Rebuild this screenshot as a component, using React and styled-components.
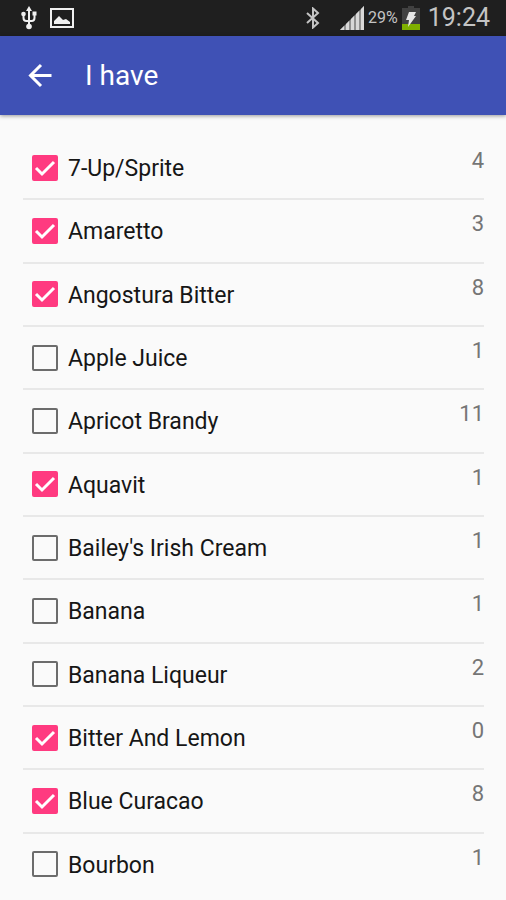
import { useState } from "react";
import styled, { createGlobalStyle } from "styled-components";

const GlobalStyle = createGlobalStyle`
  * {
    box-sizing: border-box;
  }
  body {
    margin: 0;
    background-color: #fafafa;
    font-family: Roboto, "Liberation Sans", sans-serif;
  }
`;

const Container = styled.div`
  min-height: 100vh;
  display: flex;
  flex-direction: column;
`;

const StatusBar = styled.div`
  height: 36px;
  padding: 0 16px 0 20px;
  display: flex;
  align-items: center;
  justify-content: space-between;
  background-color: #1f1f1f;
  color: #c4c4c4;
`;

const StatusGroup = styled.div`
  display: flex;
  align-items: center;
  gap: ${(props) => props.$gap}px;
`;

const Signal = styled.svg`
  margin-left: 16px;
`;

const Battery = styled.span`
  font-size: 16px;
  line-height: 36px;
`;

const Clock = styled.time`
  margin-left: 4px;
  font-size: 25px;
  line-height: 34px;
`;

const AppBar = styled.header`
  height: 79px;
  padding: 0 24px;
  display: flex;
  align-items: center;
  gap: 29px;
  background-color: #3f51b5;
  box-shadow: 0 1px 4px rgba(0, 0, 0, 0.4);
  color: #ffffff;
`;

const BackButton = styled.button`
  width: 32px;
  height: 32px;
  padding: 0;
  border: none;
  background: none;
  color: inherit;
  cursor: pointer;
`;

const Title = styled.h1`
  margin: 0;
  font-size: 28px;
  font-weight: 400;
  line-height: 32px;
`;

const List = styled.ul`
  flex: 1;
  margin: 0;
  padding: 22px 22px 3px 23px;
  display: flex;
  flex-direction: column;
  list-style: none;
`;

const Row = styled.li`
  flex: 1 0 auto;
  min-height: 56px;
  display: flex;
  justify-content: space-between;
  border-bottom: 2px solid #e8e8e8;
  &:last-child {
    border-bottom-color: transparent;
  }
`;

const Label = styled.label`
  flex: 1;
  padding-left: 9px;
  display: flex;
  align-items: center;
  gap: 10px;
  color: #161616;
  font-size: 23px;
  line-height: 28px;
  cursor: pointer;
`;

const Name = styled.span`
  padding-top: 3px;
`;

const CheckArea = styled.span`
  display: grid;
  width: 26px;
  height: 26px;
  & > * {
    grid-area: 1 / 1;
  }
`;

const Checkbox = styled.input`
  appearance: none;
  width: 26px;
  height: 26px;
  margin: 0;
  border: 2px solid #6c6c6c;
  border-radius: 2px;
  cursor: pointer;
  &:checked {
    border-color: #ff3a80;
    background-color: #ff3a80;
  }
`;

const Tick = styled.svg`
  pointer-events: none;
`;

const Count = styled.span`
  padding-top: 10px;
  color: #757575;
  font-size: 22px;
  line-height: 28px;
`;

const ingredients = [
  { name: "7-Up/Sprite", count: 4, have: true },
  { name: "Amaretto", count: 3, have: true },
  { name: "Angostura Bitter", count: 8, have: true },
  { name: "Apple Juice", count: 1, have: false },
  { name: "Apricot Brandy", count: 11, have: false },
  { name: "Aquavit", count: 1, have: true },
  { name: "Bailey's Irish Cream", count: 1, have: false },
  { name: "Banana", count: 1, have: false },
  { name: "Banana Liqueur", count: 2, have: false },
  { name: "Bitter And Lemon", count: 0, have: true },
  { name: "Blue Curacao", count: 8, have: true },
  { name: "Bourbon", count: 1, have: false },
];

const UsbIcon = () => (
  <svg width="18" height="26" viewBox="0 0 18 26" fill="none" stroke="#f0f0f0" strokeWidth="2">
    <path d="M9 4v18M3.500 9v4q0 3 3 3h5q3 0 3-3V9" />
    <path d="M9 1l3 5H6z" fill="#f0f0f0" stroke="none" />
    <circle cx="9" cy="21.500" r="2.800" fill="#f0f0f0" stroke="none" />
    <circle cx="3.500" cy="9" r="2.300" fill="#f0f0f0" stroke="none" />
    <path d="M12.500 6.500h4v4h-4z" fill="#f0f0f0" stroke="none" />
  </svg>
);

const PictureIcon = () => (
  <svg width="24" height="20" viewBox="0 0 24 20">
    <rect x="1" y="1" width="22" height="18" fill="none" stroke="#f0f0f0" strokeWidth="2" />
    <path d="M4 16v-3l5-5 4 4 3-1 4 3v2z" fill="#f0f0f0" />
  </svg>
);

const BluetoothIcon = () => (
  <svg width="14" height="22" viewBox="0 0 14 22" fill="none" stroke="#c4c4c4" strokeWidth="2">
    <path d="M1 6l11 10-5 4.500V1.500L12 6 1 16" />
  </svg>
);

const SignalIcon = () => (
  <Signal width="24" height="24" viewBox="0 0 24 24">
    <path d="M24 0v24H0z" fill="#8f8f8f" />
    <path d="M4 20v4H0zM6 18l3-3v9H6zM11 13l3-3v14h-3zM16 8l3-3v19h-3zM21 3l3-3v24h-3z" fill="#d8d8d8" />
  </Signal>
);

const BatteryIcon = () => (
  <svg width="18" height="24" viewBox="0 0 18 24">
    <path d="M6 0h6v2h6v16H0V2h6z" fill="#414141" />
    <path d="M0 18h18v6H0z" fill="#7fb000" />
    <path d="M7 6h7l-2 4h2l-8 11 1-7H4z" fill="#e6e6e6" />
  </svg>
);

const BackIcon = () => (
  <svg width="32" height="32" viewBox="0 0 32 32" fill="none" stroke="currentColor" strokeWidth="3">
    <path d="M27.500 15.500H7M17 5L6.500 15.500 17 26" />
  </svg>
);

const Ingredient = ({ name, count, have }) => {
  const [checked, setChecked] = useState(have);

  return (
    <Row>
      <Label>
        <CheckArea>
          <Checkbox
            type="checkbox"
            checked={checked}
            onChange={(e) => setChecked(e.target.checked)}
          />
          {checked && (
            <Tick width="26" height="26" viewBox="0 0 26 26" fill="none" stroke="#ffffff" strokeWidth="3">
              <path d="M4 13l6 6L22 7" />
            </Tick>
          )}
        </CheckArea>
        <Name>{name}</Name>
      </Label>
      <Count>{count}</Count>
    </Row>
  );
};

const App = () => {
  return (
    <Container>
      <GlobalStyle />
      <StatusBar>
        <StatusGroup $gap={12}>
          <UsbIcon />
          <PictureIcon />
        </StatusGroup>
        <StatusGroup $gap={4}>
          <BluetoothIcon />
          <SignalIcon />
          <Battery>29%</Battery>
          <BatteryIcon />
          <Clock>19:24</Clock>
        </StatusGroup>
      </StatusBar>
      <AppBar>
        <BackButton type="button" aria-label="Back">
          <BackIcon />
        </BackButton>
        <Title>I have</Title>
      </AppBar>
      <List>
        {ingredients.map((item) => (
          <Ingredient key={item.name} {...item} />
        ))}
      </List>
    </Container>
  );
};

export default App;
